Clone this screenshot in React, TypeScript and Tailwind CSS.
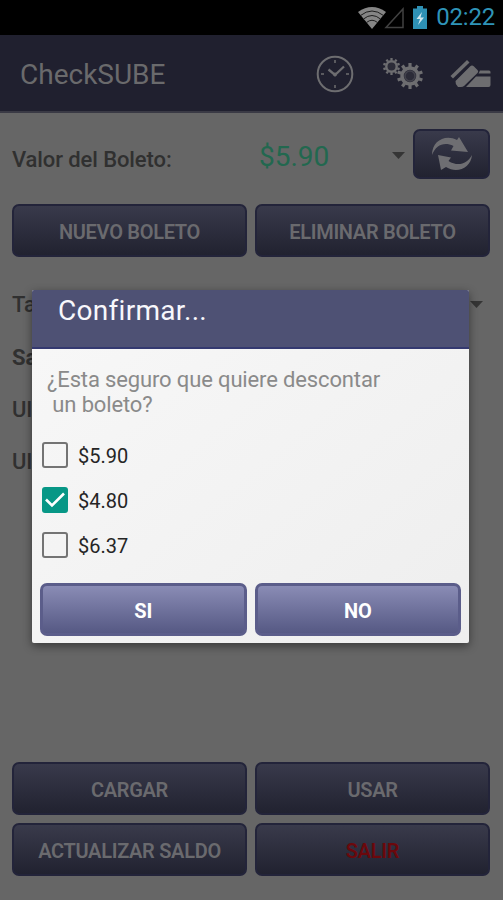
import { useState } from 'react';
import clsx from 'clsx';

interface ActionButtonProps {
  label: string;
  danger?: boolean;
}

function ActionButton({ label, danger }: ActionButtonProps) {
  return (
    <button
      type="button"
      className={clsx(
        'h-[53px] flex-1 rounded-[7px] border-2 border-[#23243a] bg-linear-to-b from-[#393a4b] to-[#212230] pt-[2px] text-[20px] font-semibold tracking-[-0.300px]',
        danger ? 'text-[#6b080c]' : 'text-[#6a6a6e]'
      )}
    >
      {label}
    </button>
  );
}

function DialogButton({ label }: { label: string }) {
  return (
    <button
      type="button"
      className="h-[53px] flex-1 rounded-[7px] border-[3px] border-[#5b5d8a] bg-linear-to-b from-[#8a8cb5] to-[#565984] pt-[2px] text-[20px] font-bold tracking-[-0.200px] text-white"
    >
      {label}
    </button>
  );
}

function StatusBar() {
  return (
    <div className="flex h-[35px] items-center justify-end bg-black pr-[8px]">
      <svg className="mr-[-2px] h-[22px] w-[28px]" viewBox="0 0 28 22">
        <path d="M14 22 L0 5 Q14 -5 28 5 Z" fill="#858585" />
        <path d="M2.500 8.500 Q14 -.5 25.500 8.500 M5.500 12 Q14 5 22.500 12 M8.500 15.500 Q14 11 19.500 15.500" fill="none" stroke="#1d1d1d" strokeWidth="1" />
      </svg>
      <svg className="h-[22px] w-[21px]" viewBox="0 0 21 22">
        <path d="M19 2 V20.500 H2 Z" fill="none" stroke="#414141" strokeWidth="1.500" />
      </svg>
      <svg className="ml-[8px] h-[23px] w-[14px]" viewBox="0 0 14 23">
        <path d="M4 0 H10 V2.500 H14 V23 H0 V2.500 H4 Z" fill="#2e91b5" />
        <path d="M9 6 L3.500 13 H7 L5 19 L11 11.500 H7.500 Z" fill="#cfe7ef" />
      </svg>
      <span className="ml-[9px] text-[24px] leading-[35px] tracking-[-0.200px] text-[#2f94b8]">02:22</span>
    </div>
  );
}

function ClockIcon() {
  return (
    <svg className="h-[38px] w-[38px]" viewBox="0 0 38 38" fill="none" stroke="#6d6d70">
      <circle cx="19" cy="19" r="17.300" strokeWidth="2" />
      <path d="M19 5 V8 M19 30 V33 M5 19 H8 M30 19 H33" strokeWidth="1.500" />
      <path d="M12.500 14.500 L19 20 L28 11.500" strokeWidth="2.300" />
      <circle cx="19" cy="19.500" r="1.500" fill="#6d6d70" />
    </svg>
  );
}

const TEETH = [0, 36, 72, 108, 144, 180, 216, 252, 288, 324];

function GearsIcon() {
  return (
    <svg className="h-[32px] w-[42px]" viewBox="0 0 42 32">
      <g transform="translate(9.500 8.500)" stroke="#6d6d70">
        <circle r="5.200" fill="#2c2c38" strokeWidth="2.400" />
        {TEETH.map(a => (
          <path key={a} d="M0 -6 V-8.500" strokeWidth="2.300" transform={`rotate(${a})`} />
        ))}
      </g>
      <g transform="translate(28 18)" stroke="#6d6d70">
        <circle r="8" fill="#2c2c38" strokeWidth="3.500" />
        <circle r="5" fill="none" stroke="#43434d" strokeWidth="1.500" />
        {TEETH.map(a => (
          <path key={a} d="M0 -9 V-13" strokeWidth="3.200" transform={`rotate(${a})`} />
        ))}
      </g>
    </svg>
  );
}

function CardsIcon() {
  return (
    <svg className="h-[30px] w-[41px]" viewBox="0 0 41 30" fill="#6d6d70">
      <path d="M0.500 17 L17 1 L19.500 3.500 L3 19.500 Z" />
      <path d="M5.500 22 L20 7.500 Q22 5.500 24 7.500 L27.500 11 Q29 12.500 27.500 14 L14 27 Q13 28 11 28 H8 Q5 25 5.500 22 Z" />
      <path d="M30 11.500 H39 Q40.500 11.500 40.500 13 V14.500 H28.500 Z" />
      <path d="M26 17.500 H40.500 V26 Q40.500 28 38.500 28 H16 Z" />
    </svg>
  );
}

function RefreshIcon() {
  return (
    <svg className="h-[34px] w-[42px]" viewBox="0 0 42 34" fill="#6e6e72">
      <path d="M1 18 C1 4 14 -3 26 3 L28 0 L37 15 L20 13.500 L22.500 9 C13 4.500 5 8 1 18 Z" />
      <path d="M41 18 C40 31 26 37 15 30 L10 33 L7 18 L20 20.500 L17.500 24 C27 30 36 27 41 18 Z" />
    </svg>
  );
}

function Caret() {
  return (
    <svg className="mt-[2px] h-[7px] w-[13px]" viewBox="0 0 13 7">
      <path d="M0 0 H13 L6.500 7 Z" fill="#353535" />
    </svg>
  );
}

interface FareOptionProps {
  label: string;
  checked: boolean;
  onToggle: () => void;
}

function FareOption({ label, checked, onToggle }: FareOptionProps) {
  return (
    <button type="button" onClick={onToggle} className="flex h-[45px] items-center">
      <span
        className={clsx(
          'mb-[1px] flex size-[26px] items-center justify-center rounded-[3px]',
          checked ? 'bg-[#079786]' : 'border-[2.500px] border-[#747474]'
        )}
      >
        {checked && (
          <svg className="size-[26px]" viewBox="0 0 26 26">
            <path d="M4 12.500 L10 18.500 L22 6.500" fill="none" stroke="#fff" strokeWidth="2.600" />
          </svg>
        )}
      </span>
      <span className="ml-[10px] text-[20px] text-[#252525]">{label}</span>
    </button>
  );
}

function ConfirmDialog() {
  const [selected, setSelected] = useState<string[]>(['$4.80']);

  const toggle = (fare: string) => {
    setSelected(prev => (prev.includes(fare) ? prev.filter(f => f !== fare) : [...prev, fare]));
  };

  return (
    <div className="absolute top-[290px] left-[32px] flex h-[353px] w-[437px] flex-col overflow-hidden rounded-[2px] bg-linear-to-br from-[#f8f8f8] to-[#eeeeee] shadow-[0_3px_10px_rgba(0,0,0,0.450)]">
      <div className="h-[59px] border-b-2 border-[#343970] bg-[#4e5174] pl-[26px]">
        <h2 className="text-[28px] leading-[41px] tracking-[0.300px] text-[#f7f7fb]">Confirmar...</h2>
      </div>
      <p className="mt-[18px] pl-[15px] text-[22px] leading-[25px] tracking-[-0.140px] whitespace-pre text-[#8a8a8a]">
        {'¿Esta seguro que quiere descontar\n un boleto?'}
      </p>
      <div className="mt-[16px] flex flex-col pl-[10px]">
        {['$5.90', '$4.80', '$6.37'].map(fare => (
          <FareOption key={fare} label={fare} checked={selected.includes(fare)} onToggle={() => toggle(fare)} />
        ))}
      </div>
      <div className="mt-auto mb-[7px] flex gap-[8px] px-[8px]">
        <DialogButton label="SI" />
        <DialogButton label="NO" />
      </div>
    </div>
  );
}

export default function App() {
  return (
    <div className="relative flex h-[900px] w-[503px] flex-col overflow-hidden bg-[#666666] font-[Roboto,sans-serif]">
      <StatusBar />
      <header className="flex h-[78px] items-center border-b-2 border-[#3a3a45] bg-[#20202f] pt-[2px] pr-[12px] pl-[20px]">
        <h1 className="flex-1 pt-[2px] text-[28px] text-[#6a6a6c]">CheckSUBE</h1>
        <ClockIcon />
        <div className="ml-[28px]"><GearsIcon /></div>
        <div className="ml-[26px]"><CardsIcon /></div>
      </header>

      <main className="flex flex-1 flex-col pt-[16px] pr-[13px] pb-[24px] pl-[12px]">
        <div className="flex h-[50px] items-center">
          <span className="w-[247px] pt-[11px] text-[22px] font-medium tracking-[-0.100px] text-[#303030]">Valor del Boleto:</span>
          <span className="flex-1 pt-[6px] text-[28px] text-[#22684f]">$5.90</span>
          <Caret />
          <button
            type="button"
            className="ml-[8px] flex h-[50px] w-[77px] items-center justify-center rounded-[7px] border-2 border-[#23243a] bg-linear-to-b from-[#393a4b] to-[#212230]"
          >
            <RefreshIcon />
          </button>
        </div>
        <div className="mt-[25px] flex gap-[8px]">
          <ActionButton label="NUEVO BOLETO" />
          <ActionButton label="ELIMINAR BOLETO" />
        </div>

        <div className="mt-[20px] flex flex-col text-[22px] font-medium text-[#303030]">
          <div className="flex h-[52px] items-center justify-between pr-[7px]">
            <span className="pt-[2px]">Ta</span>
            <Caret />
          </div>
          <span className="h-[52px] leading-[57px] font-bold">Sa</span>
          <span className="h-[52px] leading-[57px]">Ul</span>
          <span className="h-[52px] leading-[57px]">Ul</span>
        </div>

        <div className="mt-auto flex flex-col gap-[8px]">
          <div className="flex gap-[8px]">
            <ActionButton label="CARGAR" />
            <ActionButton label="USAR" />
          </div>
          <div className="flex gap-[8px]">
            <ActionButton label="ACTUALIZAR SALDO" />
            <ActionButton label="SALIR" danger />
          </div>
        </div>
      </main>

      <ConfirmDialog />
    </div>
  );
}
